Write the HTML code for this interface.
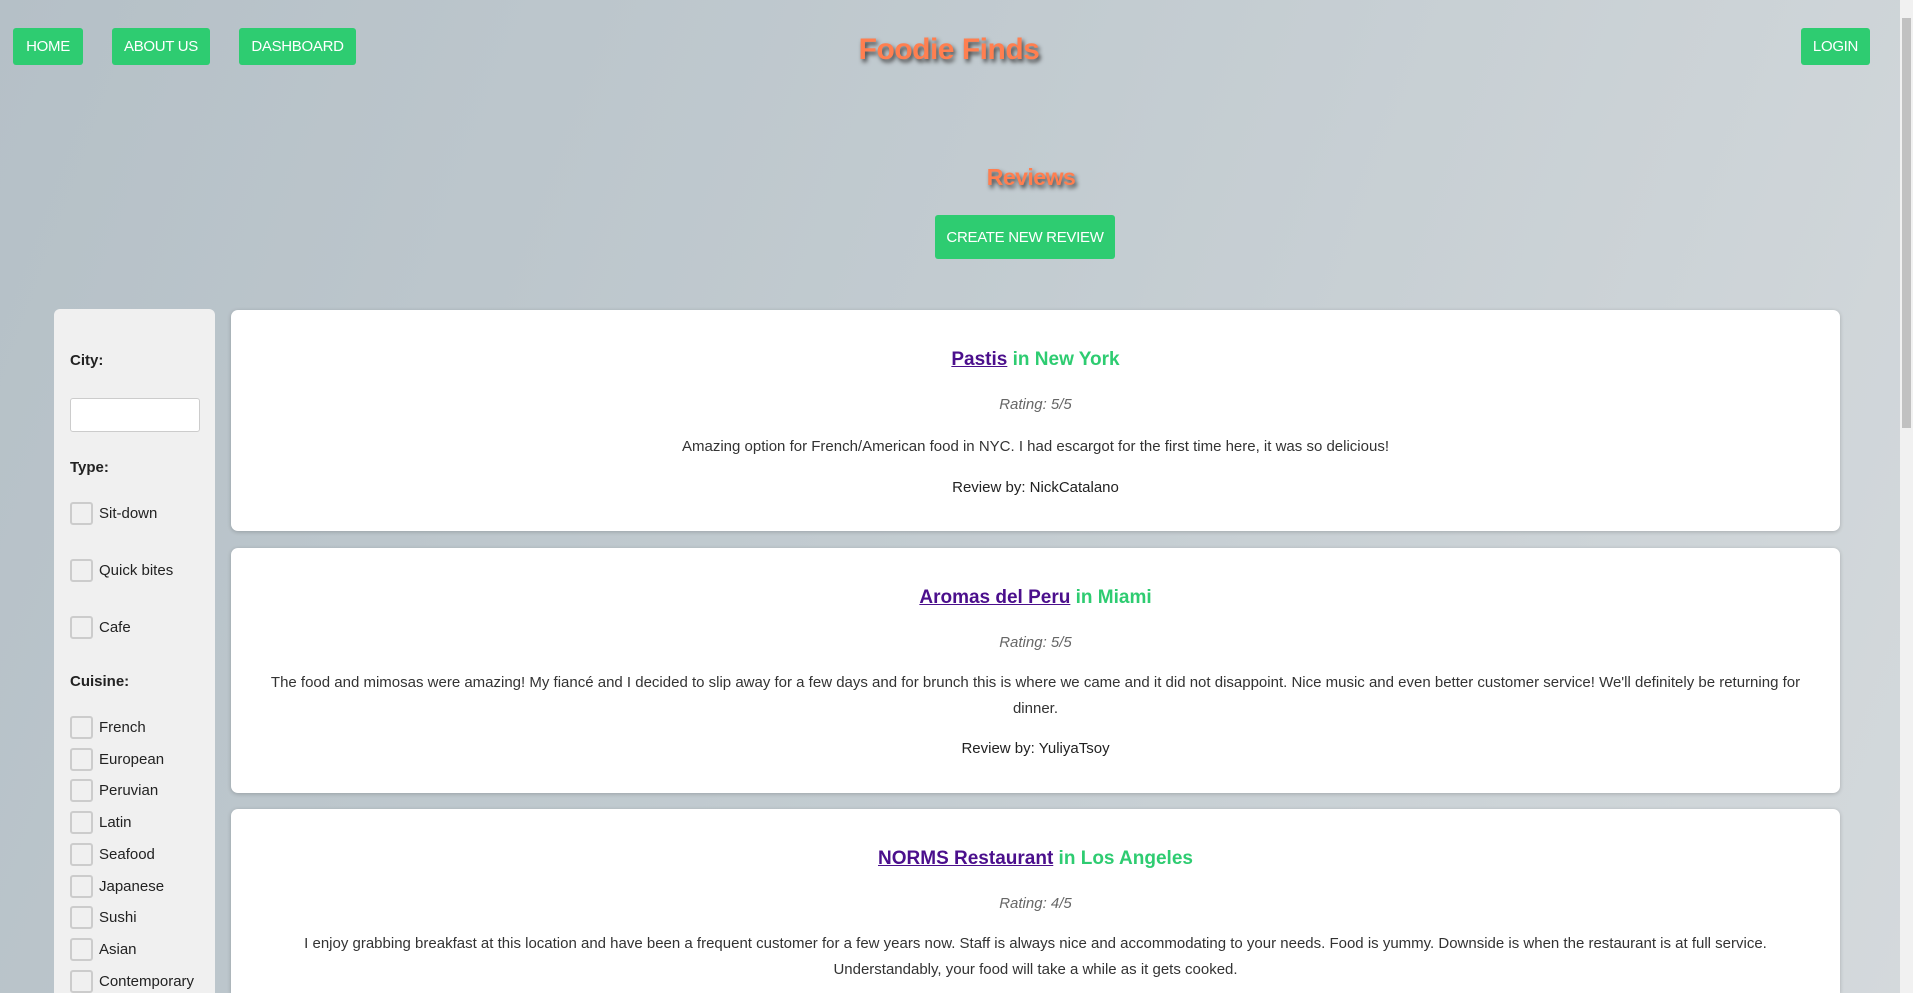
<!DOCTYPE html>
<html><head><meta charset="utf-8"><style>
*{box-sizing:border-box;margin:0;padding:0}
html,body{width:1913px;height:993px;overflow:hidden}
body{font-family:"Liberation Sans",sans-serif;background:linear-gradient(110deg,#b5c0c7 0%,#c3ccd1 50%,#d4d9dc 100%);position:relative;color:#222}
.btn{position:absolute;background:#2ecc71;color:#fff;font-size:15px;display:flex;align-items:center;justify-content:center;border-radius:3px;letter-spacing:-0.3px}
.title{position:absolute;color:#ff7f50;font-weight:bold;text-shadow:2px 3px 4px #444;transform:translateX(-50%);white-space:nowrap;letter-spacing:-0.5px}
.side{position:absolute;left:54px;top:309px;width:161px;height:684px;background:#f0f0f0;border-radius:6px 6px 0 0}
.side b{position:absolute;left:16px;font-size:15px}
.inp{position:absolute;left:16px;top:89px;width:130px;height:34px;background:#fff;border:1px solid #ccc;border-radius:3px}
.cb{position:absolute;left:16px;font-size:15px;display:flex;align-items:center}
.cb i{display:inline-block;width:23px;height:23px;border:2px solid #ccc;border-radius:3px;margin-right:6px;background:#f0f0f0}
.card{position:absolute;left:231px;width:1609px;background:#fff;border-radius:7px;box-shadow:0 1px 4px rgba(0,0,0,.2);text-align:center}
.card h3{position:absolute;left:0;right:0;font-size:19px;color:#2ecc71}
.card h3 a{color:#4b0f8c;text-decoration:underline}
.card .r{position:absolute;left:0;right:0;font-style:italic;color:#666;font-size:15px}
.card .t{position:absolute;left:34px;right:34px;font-size:15px;color:#333;line-height:26px}
.card .by{position:absolute;left:0;right:0;font-size:15px;color:#222}
.sb{position:absolute;right:0;top:0;width:13px;height:993px;background:#f1f1f1}
.sb div{position:absolute;left:2px;top:18px;width:9px;height:410px;background:#c1c1c1}
</style></head><body>
<div class="btn" style="left:13px;top:28px;width:70px;height:37px">HOME</div>
<div class="btn" style="left:112px;top:28px;width:98px;height:37px">ABOUT US</div>
<div class="btn" style="left:239px;top:28px;width:117px;height:37px">DASHBOARD</div>
<div class="btn" style="left:1801px;top:28px;width:69px;height:37px">LOGIN</div>
<div class="title" style="left:949px;top:33px;font-size:30px">Foodie Finds</div>
<div class="title" style="left:1031px;top:164px;font-size:23px">Reviews</div>
<div class="btn" style="left:935px;top:215px;width:180px;height:44px">CREATE NEW REVIEW</div>

<div class="side">
<b style="top:43px">City:</b>
<div class="inp"></div>
<b style="top:150px">Type:</b>
<div class="cb" style="top:193px"><i></i>Sit-down</div>
<div class="cb" style="top:250px"><i></i>Quick bites</div>
<div class="cb" style="top:307px"><i></i>Cafe</div>
<b style="top:364px">Cuisine:</b>
<div class="cb" style="top:407px"><i></i>French</div>
<div class="cb" style="top:439px"><i></i>European</div>
<div class="cb" style="top:470px"><i></i>Peruvian</div>
<div class="cb" style="top:502px"><i></i>Latin</div>
<div class="cb" style="top:534px"><i></i>Seafood</div>
<div class="cb" style="top:566px"><i></i>Japanese</div>
<div class="cb" style="top:597px"><i></i>Sushi</div>
<div class="cb" style="top:629px"><i></i>Asian</div>
<div class="cb" style="top:661px"><i></i>Contemporary</div>
</div>

<div class="card" style="top:310px;height:221px">
<h3 style="top:39px"><a>Pastis</a> in New York</h3>
<div class="r" style="top:86px">Rating: 5/5</div>
<div class="t" style="top:124px">Amazing option for French/American food in NYC. I had escargot for the first time here, it was so delicious!</div>
<div class="by" style="top:169px">Review by: NickCatalano</div>
</div>
<div class="card" style="top:548px;height:245px">
<h3 style="top:39px"><a>Aromas del Peru</a> in Miami</h3>
<div class="r" style="top:86px">Rating: 5/5</div>
<div class="t" style="top:122px">The food and mimosas were amazing! My fiancé and I decided to slip away for a few days and for brunch this is where we came and it did not disappoint. Nice music and even better customer service! We'll definitely be returning for dinner.</div>
<div class="by" style="top:192px">Review by: YuliyaTsoy</div>
</div>
<div class="card" style="top:809px;height:184px;border-radius:7px 7px 0 0">
<h3 style="top:39px"><a>NORMS Restaurant</a> in Los Angeles</h3>
<div class="r" style="top:86px">Rating: 4/5</div>
<div class="t" style="top:122px;left:50px;right:50px">I enjoy grabbing breakfast at this location and have been a frequent customer for a few years now. Staff is always nice and accommodating to your needs. Food is yummy. Downside is when the restaurant is at full service. Understandably, your food will take a while as it gets cooked.</div>
</div>
<div class="sb"><div></div></div>
</body></html>
